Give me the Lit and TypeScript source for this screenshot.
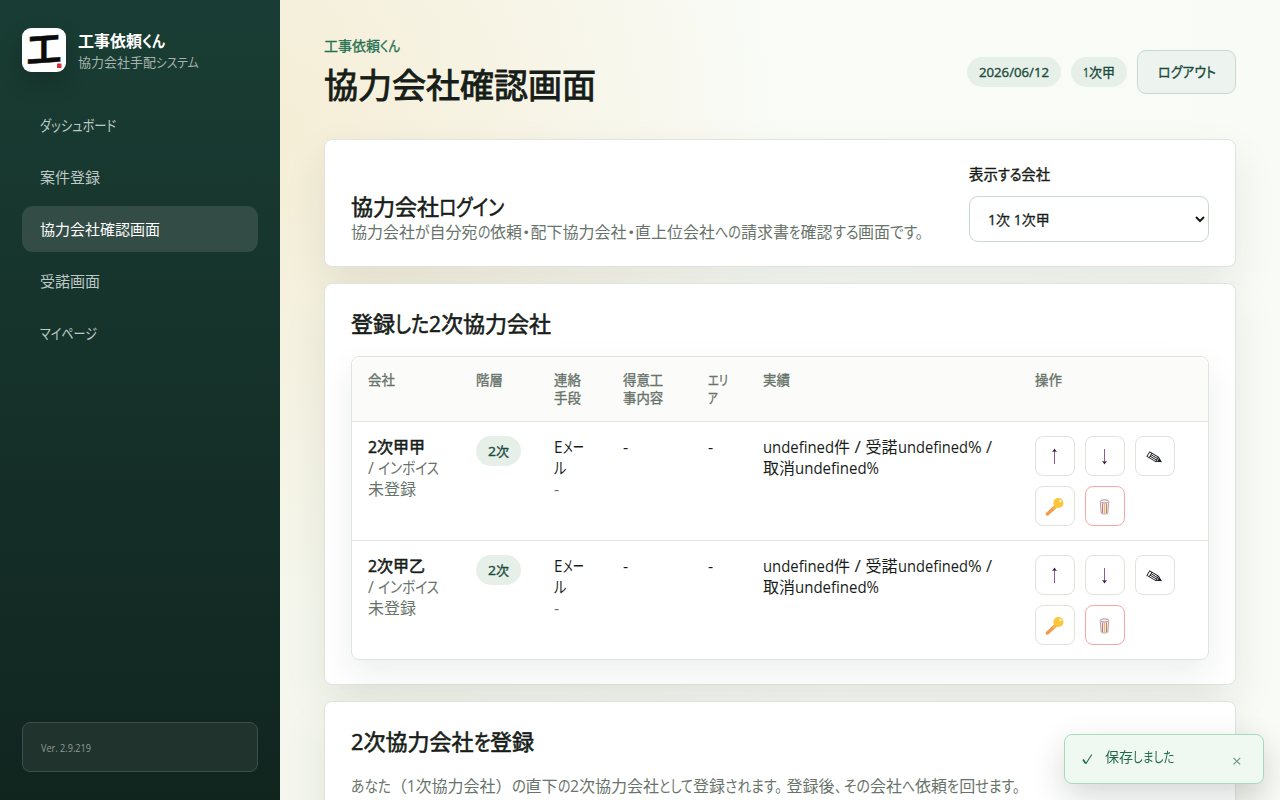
import { LitElement, html, css, svg } from "lit";
import { customElement, property, query } from "lit/decorators.js";
import { classMap } from "lit/directives/class-map.js";

/** A run of text condensed or widened to an exact advance in pixels. */
@customElement("fit-run")
class FitRun extends LitElement {
  static styles = css`
    :host { display: inline-block; white-space: pre; font-feature-settings: "palt"; }
    .run { display: inline-block; transform-origin: 0 50%; }
  `;
  @property() text = "";
  @property({ type: Number }) advance = 0;
  @query(".run") run!: HTMLElement;
  render() {
    return html`<span class="run">${this.text}</span>`;
  }
  updated() {
    this.style.width = this.advance + "px";
    this.run.style.transform = "none";
    const natural = this.run.getBoundingClientRect().width;
    this.run.style.transform = `scaleX(${this.advance / natural})`;
    this.run.style.marginRight = this.advance - natural + "px";
  }
}

/** "漢字{かな|24}" sets the braced run to 24px; "\n" breaks the line. */
const t = (source: string) =>
  source.split(/(\{[^}]*\}|\n)/).filter(Boolean).map((part) => {
    if (part === "\n") return html`<br />`;
    const m = /^\{(.*)\|([\d.]+)\}$/.exec(part);
    return m ? html`<fit-run .text=${m[1]} .advance=${Number(m[2])}></fit-run>` : part;
  });

const arrowUp = svg`<path d="M9.5 17V2.5" stroke="#8d5a9a" stroke-width="1"/><path d="M7 5.2 9.5 1.6 12 5.2 9.5 4.2z" fill="#26262c"/>`;
const arrowDown = svg`<path d="M9.5 2V16.5" stroke="#8d5a9a" stroke-width="1"/><path d="M7 13.8 9.5 17.4 12 13.8 9.5 14.8z" fill="#26262c"/>`;
const pencil = svg`<g transform="translate(9.5 10.8) rotate(31)" stroke="#1b1f24" stroke-width=".9" fill="none"><path d="M-7.2-2.7H3L7.4 0 3 2.7H-7.2zM-4.6-2.7V2.7M-4.6-.9H3M-4.6.9H3M3-2.7V2.7"/><path d="M4.6-1.5 7.6 0 4.6 1.5z" fill="#1b1f24"/></g>`;
const key = svg`<path d="M11.6 8.6 2.4 17" stroke="#f39a52" stroke-width="3.4" stroke-linecap="round"/><path d="M12 8.2 8 12" stroke="#f9b445" stroke-width="3.4"/><circle cx="13.4" cy="6" r="5.1" fill="#fcc63c"/><circle cx="15.4" cy="4" r="1.2" fill="#fff3cf"/>`;
const trash = svg`<path d="M5.3 5.2 6.2 16.2C7 17.3 12 17.3 12.8 16.2L13.7 5.2" fill="#faf1e4" stroke="#a59a9a" stroke-width=".9"/><path d="M7.6 6.5v9.5M11.4 6.5v9.5" stroke="#c56a73" stroke-width="1"/><path d="M9.5 6.5v10" stroke="#dfc36c" stroke-width="1"/><ellipse cx="9.5" cy="4.4" rx="4.3" ry="1.6" fill="#f6eef0" stroke="#a5899a" stroke-width=".9"/>`;

const actions = [
  { icon: arrowUp, label: "上へ" },
  { icon: arrowDown, label: "下へ" },
  { icon: pencil, label: "編集" },
  { icon: key, label: "鍵" },
  { icon: trash, label: "削除", danger: true },
];

const nav = [
  "{ダッシュボード|76}",
  "案件登録",
  "協力会社確認画面",
  "受諾画面",
  "{マイページ|57}",
];

const columns = [
  { label: "会社", width: "108px" },
  { label: "階層", width: "78px" },
  { label: "連絡\n手段", width: "69px" },
  { label: "得意工\n事内容", width: "85px" },
  { label: "{エリ|20}\n{ア|10}", width: "55px" },
  { label: "実績", width: "272px" },
  { label: "操作", width: "auto" },
];

@customElement("app-root")
class AppRoot extends LitElement {
  static styles = css`
    :host {
      display: block;
      height: 800px;
      overflow: hidden;
      font-family: "Open Sans", "Noto Sans CJK JP", sans-serif;
      font-size: 16px;
      line-height: 21px;
      color: #171d18;
    }
    * { box-sizing: border-box; }
    h1, h2, p { margin: 0; }
    .shell { display: grid; grid-template-columns: 280px 1fr; height: 800px; }
    .side {
      display: flex; flex-direction: column; padding: 28px 22px;
      background: linear-gradient(180deg, #193d34 0%, #11251f 100%);
    }
    .brand { display: flex; gap: 12px; height: 44px; }
    .logo {
      display: block; width: 44px; height: 44px; border-radius: 9px; background: #fff; overflow: visible;
      box-shadow: 0 10px 24px rgba(0, 0, 0, 0.2);
    }
    .brand-name { font-weight: 600; color: #fff; line-height: 22px; padding-top: 2px; }
    .brand-sub { font-size: 13px; line-height: 20px; color: #a6b4af; }
    .nav { display: flex; flex-direction: column; gap: 6px; margin-top: 30px; }
    .item {
      height: 46px; line-height: 47px; padding-left: 18px; border-radius: 11px;
      font-size: 15px; color: #bdc8c4;
    }
    .item.on { background: #334d46; color: #fff; }
    .ver {
      margin-top: auto; height: 50px; line-height: 51px; padding-left: 18px;
      border: 1px solid #3c4f48; border-radius: 8px; background: #20342d;
      font-size: 10px; color: #8c9995;
    }
    .main {
      padding: 36px 44px 0; overflow: hidden;
      background:
        radial-gradient(circle at 0 130px, rgba(246, 205, 130, 0.22), transparent 500px),
        linear-gradient(90deg, #f5f7ee 0%, #fafcf8 55%, #f9fbf6 100%);
    }
    .top { display: flex; justify-content: space-between; height: 103px; }
    .eyebrow { font-size: 14px; font-weight: 400; -webkit-text-stroke: 0.3px; color: #24704f; line-height: 20px; }
    h1 { font-size: 34px; line-height: 46px; font-weight: 400; -webkit-text-stroke: 0.95px; margin-top: 6px; }
    .tools { display: flex; align-items: center; gap: 10px; height: 44px; margin-top: 14px; }
    .badge {
      display: inline-flex; align-items: center; height: 30px; padding: 0 12px; border-radius: 15px;
      background: #e7efe9; color: #1a4b3b; font-size: 13px; font-weight: 400; -webkit-text-stroke: 0.35px;
    }
    .logout {
      width: 99px; height: 44px; border: 1px solid #c8d9cf; border-radius: 9px; padding: 0;
      background: #edf4f0; color: #1a4b3b; font: 400 14px/20px "Open Sans", "Noto Sans CJK JP", sans-serif;
      -webkit-text-stroke: 0.35px;
    }
    .card {
      background: #fff; border: 1px solid #dfe5dd; border-radius: 8px; padding: 24px 26px;
      margin-bottom: 16px; box-shadow: 0 18px 44px rgba(28, 48, 36, 0.09);
    }
    .login { display: flex; justify-content: space-between; align-items: flex-end; height: 128px; }
    h2 { font-size: 22px; line-height: 31px; font-weight: 400; -webkit-text-stroke: 0.6px; }
    .login h2 { line-height: 30px; }
    .login p { padding-top: 1px; margin-bottom: -1px; }
    .muted { color: #68736a; }
    .field { display: flex; flex-direction: column; width: 240px; gap: 11px; font-size: 14.4px; -webkit-text-stroke: 0.4px; }
    select {
      width: 240px; height: 46px; border: 1px solid #cbd8ce; border-radius: 9px; background: #fff;
      padding: 0 0 0 14px; color: #171d18; font: 400 14px "Open Sans", "Noto Sans CJK JP", sans-serif;
      -webkit-text-stroke: 0.3px;
    }
    .frame {
      margin-top: 17px; border: 1px solid #dfe5dd; border-radius: 8px; overflow: hidden;
      height: 304px;
    }
    .lift { border-radius: 8px; box-shadow: 0 14px 34px rgba(28, 40, 32, 0.08); }
    table { width: 100%; table-layout: fixed; border-spacing: 0; }
    th, td { padding: 15px 0 13px 16px; text-align: left; vertical-align: top; white-space: nowrap; }
    th {
      height: 65px; padding-top: 14px; font-size: 13.4px; line-height: 18px; font-weight: 400;
      -webkit-text-stroke: 0.35px; color: #68736a; background: #fbfbf9; border-bottom: 1px solid #dfe5dd;
    }
    td { height: 119px; }
    td.tight { padding-top: 14px; }
    .line td { border-bottom: 1px solid #dfe5dd; }
    strong { font-weight: 400; -webkit-text-stroke: 0.55px; }
    .acts { display: flex; flex-wrap: wrap; gap: 10px; width: 150px; }
    .act {
      width: 40px; height: 40px; padding: 0 1px 0 0; border: 1px solid #e0e2dc; border-radius: 8px;
      background: #fff; display: grid; place-items: center;
    }
    .act.danger { border-color: #f1aaa6; }
    .act svg { display: block; width: 19px; height: 19px; }
    .desc { margin-top: 19px; white-space: nowrap; }
    .toast {
      position: fixed; left: 1064px; top: 734px; width: 200px; height: 50px; display: flex;
      padding: 12px 19px 0 17px; border: 1px solid #a8dabb; border-radius: 8px; background: #eff9f2;
      box-shadow: 0 12px 32px rgba(20, 40, 30, 0.18); color: #23694b; font-size: 14px; line-height: 20px;
    }
    .toast .tick { width: 11px; height: 20px; margin-top: 2px; }
    .toast .msg { margin-left: 12px; flex: 1; }
    .toast .close { width: 12px; margin-top: 4px; font-size: 17px; color: #6c9c82; }
  `;

  row(name: string, last: boolean) {
    return html`<tr class=${classMap({ line: !last })}>
      <td><strong>${t("{2|9}" + name)}</strong><br /><span class="muted">${t("{/ |10}{インボイス|61}\n未登録")}</span></td>
      <td class="tight"><span class="badge">${t("{2|8}次")}</span></td>
      <td>${t("{E|8.5}{メー|21}\n{ル|12.5}")}<br /><span class="muted">-</span></td>
      <td>-</td>
      <td>-</td>
      <td>${t("{undefined|71}件{ / |15.5}受諾{undefined|70}{% /|24}\n取消{undefined%|84}")}</td>
      <td class="tight"><div class="acts">${actions.map((a) => html`<button class=${classMap({ act: true, danger: !!a.danger })} aria-label=${a.label}><svg viewBox="0 0 19 19" fill="none">${a.icon}</svg></button>`)}</div></td>
    </tr>`;
  }

  render() {
    return html`<div class="shell">
      <aside class="side">
        <div class="brand">
          <svg class="logo" viewBox="0 0 44 44">
            <text x="22" y="34" text-anchor="middle" font-family="Noto Sans CJK JP" font-weight="700" font-size="35" fill="#0c0c0c" stroke="#0c0c0c" stroke-width=".5" transform="translate(0 1.5) skewY(-4)">工</text>
            <rect x="35" y="35.5" width="4.5" height="4.5" rx=".5" fill="#d8303a" />
          </svg>
          <div>
            <div class="brand-name">${t("工事依頼{くん|23}")}</div>
            <div class="brand-sub">${t("協力会社手配{システム|42.5}")}</div>
          </div>
        </div>
        <nav class="nav">${nav.map((n, i) => html`<a class=${classMap({ item: true, on: i === 2 })}>${t(n)}</a>`)}</nav>
        <div class="ver">${t("{Ver. 2.9.219|50}")}</div>
      </aside>
      <main class="main">
        <header class="top">
          <div>
            <div class="eyebrow">${t("工事依頼{くん|20}")}</div>
            <h1>協力会社確認画面</h1>
          </div>
          <div class="tools">
            <span class="badge">${t("{2026/06/12|70}")}</span>
            <span class="badge">${t("{1|6}次甲")}</span>
            <button class="logout">${t("{ログアウト|58}")}</button>
          </div>
        </header>
        <section class="card login">
          <div>
            <h2>${t("協力会社{ログイン|65}")}</h2>
            <p class="muted">${t("協力会社{が|14.5}自分宛{の|12.5}依頼{・|8.5}配下協力会社{・|8.5}直上位会社{への|26}請求書{を|11.5}確認{する|25.5}画面{です。|33}")}</p>
          </div>
          <div class="field">
            <span>${t("表示{する|23.5}会社")}</span>
            <select><option>1次 1次甲</option></select>
          </div>
        </section>
        <section class="card">
          <h2>${t("登録{した|34}{2|12}次協力会社")}</h2>
          <div class="lift"><div class="frame">
            <table>
              <colgroup>${columns.map((c) => html`<col width=${c.width} />`)}</colgroup>
              <thead><tr>${columns.map((c) => html`<th>${t(c.label)}</th>`)}</tr></thead>
              <tbody>${this.row("次甲甲", false)}${this.row("次甲乙", true)}</tbody>
            </table>
          </div></div>
        </section>
        <section class="card">
          <h2>${t("{2|12.5}次協力会社{を|16.5}登録")}</h2>
          <p class="muted desc">${t("{あなた|40}（{1|8.5}次協力会社）{の|14}直下{の|12.5}{2|9}次協力会社{として|34}登録{されます。|57}{ |4.5}登録後{、|6.5}{ |3}{その|26}会社{へ|13}依頼{を|12}回{せます。|45}")}</p>
        </section>
      </main>
      <div class="toast" role="status">
        <svg class="tick" viewBox="0 0 11 20" fill="none" stroke="#23694b"><path d="M1 10.5 3.8 14.5" stroke-width="1.8" /><path d="M3.8 14.8 9.8 5.5" stroke-width="1.1" /></svg>
        <span class="msg">${t("保存{しました|41.5}")}</span>
        <span class="close">×</span>
      </div>
    </div>`;
  }
}
